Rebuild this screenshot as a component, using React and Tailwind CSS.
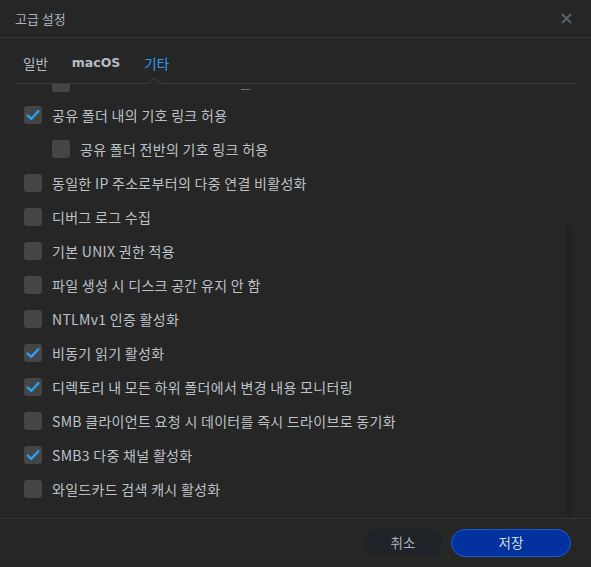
import React from "react";

const FONT = { fontFamily: '"Noto Sans CJK KR", "Noto Sans", sans-serif' };

function Box({ checked, className = "" }) {
  return (
    <div className={`w-[18px] h-[18px] rounded-[3px] bg-[#454545] flex items-center justify-center shrink-0 ${className}`}>
      {checked && (
        <svg width="18" height="18" viewBox="0 0 18 18">
          <path d="M3.6 9.4 L7.2 12.9 L14.4 5.2" fill="none" stroke="#2f9ef3" strokeWidth="2.4" strokeLinecap="round" strokeLinejoin="round" />
        </svg>
      )}
    </div>
  );
}

function Row({ label, checked, indent }) {
  return (
    <div className={`h-[34px] flex items-center ${indent ? "pl-[52px]" : "pl-[24px]"}`}>
      <Box checked={checked} />
      <span className="ml-[10px] text-[14px] tracking-[0.3px] text-[#bcc2c8] whitespace-nowrap leading-none">{label}</span>
    </div>
  );
}

const rows = [
  { label: "공유 폴더 내의 기호 링크 허용", checked: true },
  { label: "공유 폴더 전반의 기호 링크 허용", indent: true },
  { label: "동일한 IP 주소로부터의 다중 연결 비활성화" },
  { label: "디버그 로그 수집" },
  { label: "기본 UNIX 권한 적용" },
  { label: "파일 생성 시 디스크 공간 유지 안 함" },
  { label: "NTLMv1 인증 활성화" },
  { label: "비동기 읽기 활성화", checked: true },
  { label: "디렉토리 내 모든 하위 폴더에서 변경 내용 모니터링", checked: true },
  { label: "SMB 클라이언트 요청 시 데이터를 즉시 드라이브로 동기화" },
  { label: "SMB3 다중 채널 활성화", checked: true },
  { label: "와일드카드 검색 캐시 활성화" },
];

export default function App() {
  return (
    <div className="w-[591px] h-[567px] bg-[#262626] flex flex-col overflow-hidden" style={FONT}>
      {/* Header */}
      <div className="h-[38px] shrink-0 border-b border-[#31373c] flex items-center justify-between pl-[15px] pr-[19px]">
        <span className="text-[13px] text-[#aab2ba] leading-none">고급 설정</span>
        <svg width="11" height="11" viewBox="0 0 11 11">
          <path d="M1 1 L10 10 M10 1 L1 10" stroke="#5b6168" strokeWidth="2" />
        </svg>
      </div>

      {/* Tabs */}
      <div className="h-[46px] shrink-0 ml-[15px] w-[560px] border-b border-[#343b42] relative flex items-center pl-[8px] pt-[6px]">
        <span className="text-[13.5px] text-[#b4bcc4] leading-none">일반</span>
        <span className="ml-[24px] font-bold text-[#b4bcc4] leading-none" style={{ fontFamily: '"DejaVu Sans", sans-serif', fontSize: "12.5px" }}>macOS</span>
        <span className="ml-[24px] text-[13.5px] text-[#2f9ef3] leading-none">기타</span>
        <svg className="absolute left-[133px] bottom-[-1px]" width="13" height="7" viewBox="0 0 13 7">
          <path d="M0 6.5 L6.5 1 L13 6.5" fill="#262626" stroke="#343b42" strokeWidth="1.2" />
        </svg>
      </div>

      {/* Content */}
      <div className="flex-1 relative overflow-hidden">
        <div className="mt-[-20px]">
          <div className="h-[34px] flex items-center pl-[52px]">
            <div className="w-[18px] h-[18px] rounded-[3px] bg-[#454545] mt-[4px]" />
            <div className="ml-[171px] w-[9px] h-[1px] bg-[#6c737a] mt-[16px]" />
          </div>
          {rows.map((r, i) => (
            <Row key={i} {...r} />
          ))}
        </div>
        <div className="absolute right-[18px] top-[141px] bottom-[1px] w-[7px] rounded-[3px] bg-[#222222]" />
      </div>

      {/* Footer */}
      <div className="h-[49px] shrink-0 border-t border-[#2e3439] flex items-center justify-end pr-[20px] gap-[9px] pb-[1px]">
        <button className="w-[78px] h-[27px] rounded-full bg-[#1f2327] text-[13.5px] text-[#aab2ba] leading-none">취소</button>
        <button className="w-[120px] h-[28px] rounded-full bg-[#0132a0] border border-[#1c5cd0] text-[13.5px] text-[#d4dae4] leading-none">저장</button>
      </div>
    </div>
  );
}
